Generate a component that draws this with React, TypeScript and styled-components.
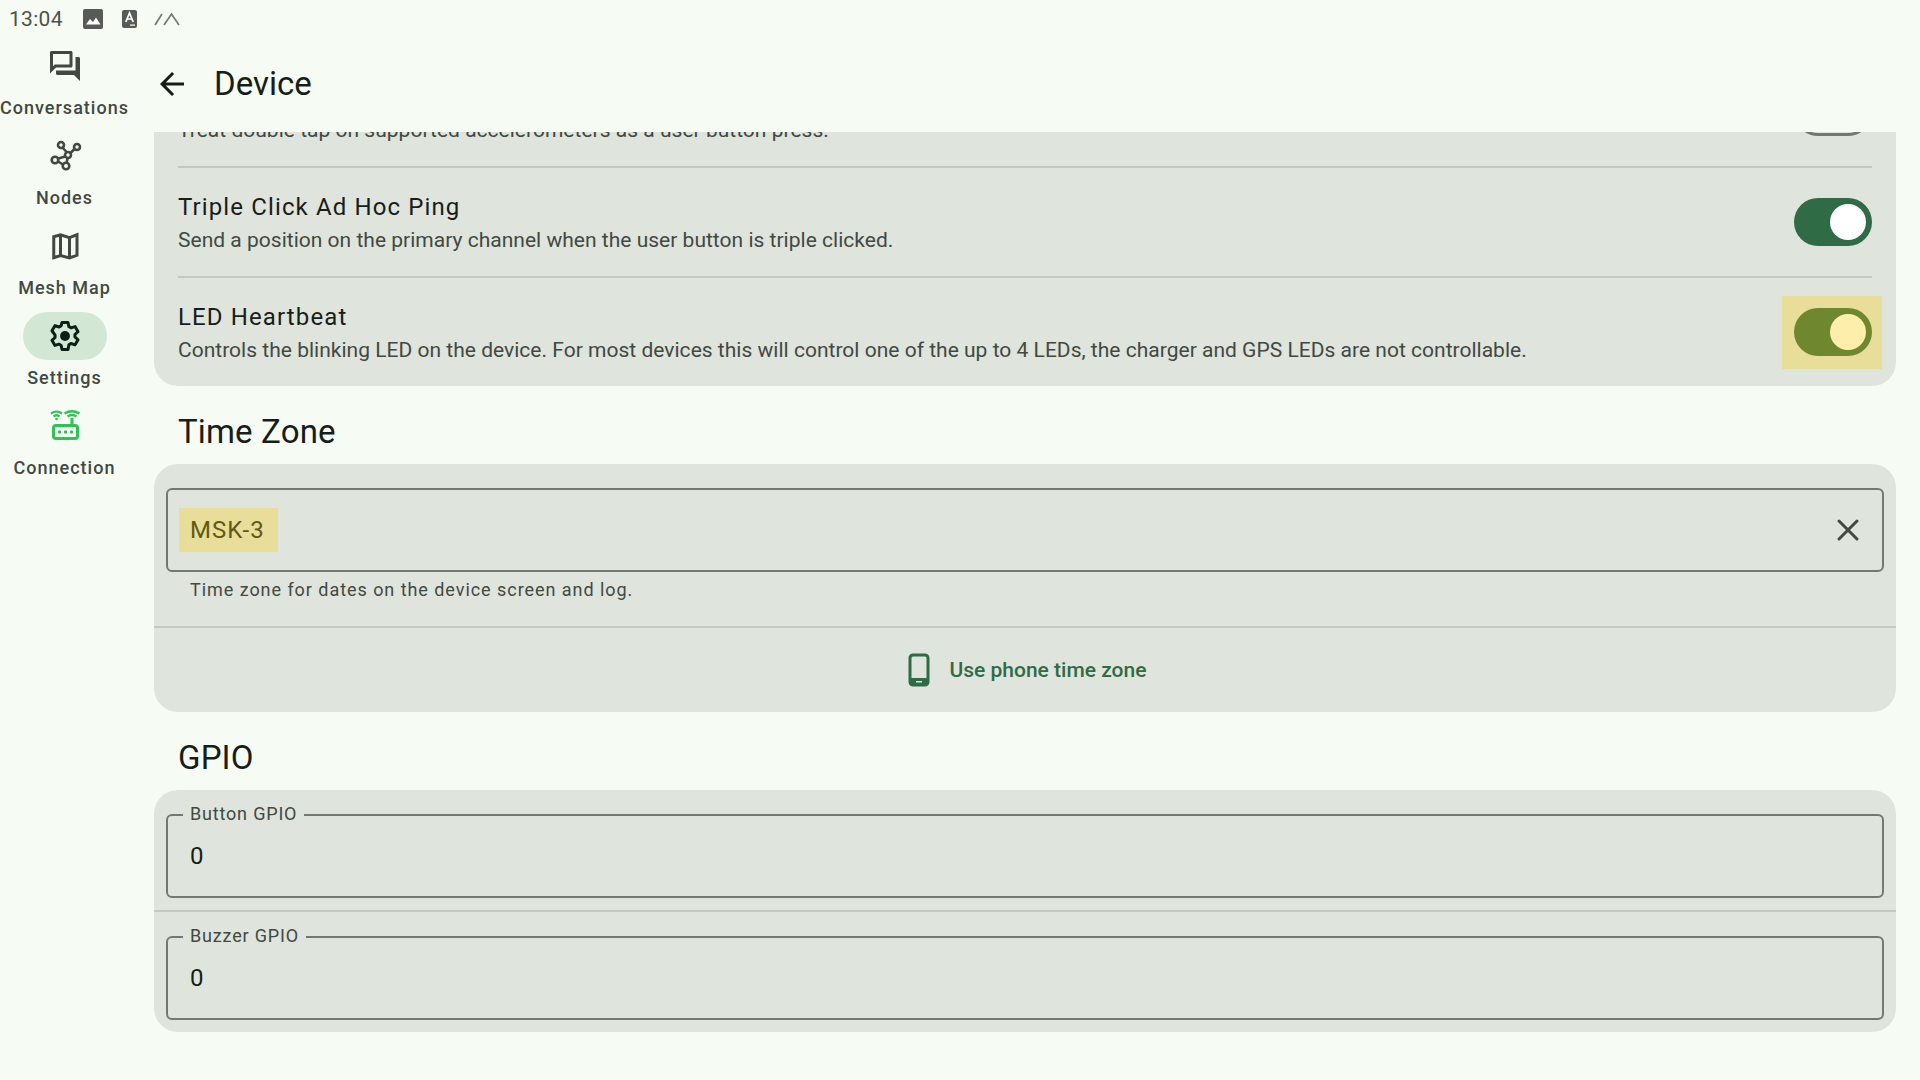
import React from "react";
import styled, { createGlobalStyle } from "styled-components";

const Global = createGlobalStyle`
  html, body { margin: 0; padding: 0; height: 100%; overflow: hidden; background: #f6fbf3; }
  body { font-family: Roboto, "Liberation Sans", sans-serif; color: #171d19; }
  * { box-sizing: border-box; }
`;

const Screen = styled.div`
  width: 1920px;
  height: 1080px;
  display: flex;
  flex-direction: column;
  background: #f6fbf3;
  overflow: hidden;
`;
const StatusBar = styled.div`
  height: 36px;
  flex: none;
  display: flex;
  align-items: center;
  padding: 2px 0 0 9px;
  color: #4c524e;
`;
const Clock = styled.span`
  font-size: 21px;
  width: 74px;
  letter-spacing: 0.3px;
`;
const StatusIcon = styled.svg<{ $gap: number }>`
  display: block;
  flex: none;
  margin-right: ${(p) => p.$gap}px;
`;
const Body = styled.div`
  flex: 1;
  display: flex;
  min-height: 0;
`;
const Rail = styled.nav`
  width: 129px;
  flex: none;
  padding-top: 6px;
  display: flex;
  flex-direction: column;
`;
const RailItem = styled.div`
  height: 90px;
  display: flex;
  flex-direction: column;
  align-items: center;
`;
const Pill = styled.div<{ $active?: boolean }>`
  width: 84px;
  height: 48px;
  border-radius: 24px;
  display: flex;
  align-items: center;
  justify-content: center;
  background: ${(p) => (p.$active ? "#d2e8d5" : "transparent")};
  color: ${(p) => (p.$active ? "#0e2016" : "#414942")};
`;
const RailLabel = styled.span`
  margin-top: 6px;
  font-size: 18px;
  line-height: 24px;
  font-weight: 500;
  letter-spacing: 1px;
  white-space: nowrap;
  color: #414942;
`;
const Main = styled.main`
  flex: 1;
  min-width: 0;
  display: flex;
  flex-direction: column;
`;
const TopBar = styled.header`
  height: 96px;
  flex: none;
  display: flex;
  align-items: center;
  padding-left: 25px;
`;
const BackIcon = styled.svg`
  width: 36px;
  height: 36px;
  flex: none;
  color: #171d19;
  margin-right: 24px;
`;
const Title = styled.h1`
  margin: 0;
  font-size: 33px;
  font-weight: 400;
  line-height: 42px;
`;
const Viewport = styled.div`
  flex: 1;
  min-height: 0;
  overflow: hidden;
  padding: 0 24px 0 25px;
`;
const ScrollContent = styled.div`
  margin-top: -74px;
`;
const Card = styled.section`
  background: #dfe4dd;
  border-radius: 24px;
`;
const SettingRow = styled.div<{ $divider?: boolean }>`
  margin: 0 24px;
  height: ${(p) => (p.$divider ? 110 : 108)}px;
  display: flex;
  align-items: center;
  justify-content: space-between;
  border-bottom: ${(p) => (p.$divider ? "2px solid #c3c9c2" : "none")};
`;
const RowText = styled.div`
  display: flex;
  flex-direction: column;
`;
const RowTitle = styled.div`
  min-height: 36px;
  font-size: 24px;
  line-height: 36px;
  letter-spacing: 1.12px;
  color: #171d19;
`;
const RowDesc = styled.div`
  font-size: 21px;
  line-height: 30px;
  letter-spacing: 0.015px;
  color: #414942;
`;
const SwitchHighlight = styled.div<{ $on?: boolean }>`
  position: relative;
  width: 78px;
  height: 48px;
  flex: none;
  &::before {
    content: "";
    display: ${(p) => (p.$on ? "block" : "none")};
    position: absolute;
    inset: -12px -10px -13px -12px;
    background: #e8de9a;
  }
`;
const Track = styled.div<{ $tone: "green" | "olive" | "off" }>`
  position: relative;
  width: 78px;
  height: 48px;
  border-radius: 24px;
  background: ${(p) => (p.$tone === "green" ? "#2f6b45" : p.$tone === "olive" ? "#6f872e" : "#dfe4dd")};
  border: ${(p) => (p.$tone === "off" ? "3px solid #717971" : "none")};
`;
const Thumb = styled.div<{ $tone: "green" | "olive" }>`
  position: absolute;
  top: 6px;
  right: 6px;
  width: 36px;
  height: 36px;
  border-radius: 50%;
  background: ${(p) => (p.$tone === "green" ? "#ffffff" : "#fdeeab")};
`;
const SectionTitle = styled.h2`
  margin: 0;
  height: 78px;
  padding: 12px 0 0 24px;
  display: flex;
  align-items: center;
  font-size: 33px;
  font-weight: 400;
  letter-spacing: 0.15px;
  color: #171d19;
`;
const FieldBlock = styled.div<{ $divider?: boolean }>`
  padding: 24px 12px 12px;
  border-bottom: ${(p) => (p.$divider ? "2px solid #c3c9c2" : "none")};
`;
const OutlinedField = styled.div`
  position: relative;
  height: 84px;
  border: 2px solid #717971;
  border-radius: 6px;
  display: flex;
  align-items: center;
  padding: 0 16px 0 22px;
  justify-content: space-between;
`;
const ValueText = styled.span`
  font-size: 24px;
  line-height: 36px;
  letter-spacing: 0.3px;
  color: #171d19;
`;
const MatchedValue = styled.span`
  margin-left: -11px;
  padding: 0 13px 0 11px;
  height: 44px;
  display: flex;
  align-items: center;
  font-size: 24px;
  letter-spacing: 1px;
  background: #e8de9a;
  color: #625a14;
`;
const FloatLabel = styled.label`
  position: absolute;
  top: -14px;
  left: 15px;
  padding: 0 7px;
  background: #dfe4dd;
  font-size: 18px;
  line-height: 24px;
  letter-spacing: 0.82px;
  color: #414942;
`;
const Support = styled.div`
  margin: 6px 0 0 24px;
  font-size: 18px;
  line-height: 24px;
  letter-spacing: 0.95px;
  color: #414942;
  padding-bottom: 12px;
`;
const ActionRow = styled.div`
  height: 84px;
  display: flex;
  align-items: center;
  justify-content: center;
  gap: 20px;
  padding-left: 4px;
  color: #2f6b45;
  font-size: 21px;
  font-weight: 500;
  letter-spacing: 0;
`;

const Forum = () => (
  <svg width="36" height="36" viewBox="0 0 24 24" fill="currentColor">
    <path d="M15 4v7H5.170L4 12.170V4h11m1-2H3c-.550 0-1 .450-1 1v14l4-4h10c.550 0 1-.450 1-1V3c0-.550-.450-1-1-1zm5 4h-2v9H6v2c0 .550.450 1 1 1h11l4 4V7c0-.550-.450-1-1-1z" />
  </svg>
);
const Nodes = () => (
  <svg width="36" height="36" viewBox="0 0 36 36" fill="none" stroke="currentColor" strokeWidth="2.600">
    <path d="M20 14.500 L15.500 9.500 M23.500 15 L27.500 11 M18.500 18.500 L11 20.500 M20.500 19.800 L19.700 25" />
    <circle cx="14" cy="7" r="3" />
    <circle cx="30" cy="9" r="3" />
    <circle cx="21" cy="17" r="3" />
    <circle cx="8" cy="22" r="3.300" />
    <circle cx="19" cy="28" r="3.300" />
    <path d="M11 23.500 L16 26.500" />
  </svg>
);
const MapIcon = () => (
  <svg width="36" height="36" viewBox="0 0 24 24" fill="none" stroke="currentColor" strokeWidth="2" strokeLinejoin="miter">
    <path d="M4.500 5.800 L9 4.600 L15 6.400 L20 4.400 V18.200 L15 20 L9 18.400 L4.500 19.800 Z" />
    <path d="M9 4.600 V18.400 M15 6.400 V20" />
  </svg>
);
const Gear = () => (
  <svg width="36" height="36" viewBox="0 0 24 24" fill="none" stroke="currentColor" strokeWidth="2" strokeLinejoin="round">
    <path d="M10 3h4l.6 2.800c.5.2 1 .5 1.400.8l2.700-.9 2 3.400-2.100 1.900a6 6 0 0 1 0 1.600l2.100 1.900-2 3.400-2.700-.9c-.4.3-.9.6-1.400.8L14 21h-4l-.6-2.800c-.5-.2-1-.5-1.400-.8l-2.700.9-2-3.400 2.100-1.900a6 6 0 0 1 0-1.600L3.300 8.500l2-3.400 2.700.9c.4-.3.9-.6 1.400-.8z" />
    <circle cx="12" cy="12" r="3.300" fill="currentColor" stroke="none" />
  </svg>
);
const Router = () => (
  <svg width="36" height="36" viewBox="0 0 36 36" fill="none" stroke="#2fc254" strokeWidth="3">
    <rect x="6.500" y="17.500" width="24" height="13" rx="2.500" />
    <path d="M25 17 V10" />
    <circle cx="12.500" cy="24" r="1.700" fill="#2fc254" stroke="none" />
    <circle cx="18.500" cy="24" r="1.700" fill="#2fc254" stroke="none" />
    <circle cx="24.500" cy="24" r="1.700" fill="#2fc254" stroke="none" />
    <path d="M4 5.500 Q9.500 1.500 15 5.500 M6.500 8.500 Q9.500 6 12.500 8.500" strokeWidth="2.200" />
    <circle cx="9.500" cy="11" r="1.300" fill="#2fc254" stroke="none" />
    <path d="M17.500 5.500 Q25 1 32.500 5.500 M20.500 8.500 Q25 5.500 29.500 8.500" strokeWidth="2.400" />
  </svg>
);
const Phone = () => (
  <svg width="22" height="34" viewBox="0 0 22 34" fill="none">
    <rect x="2" y="2" width="18" height="30" rx="3" stroke="#2f6b45" strokeWidth="3" />
    <rect x="2" y="25" width="18" height="7" fill="#2f6b45" />
    <rect x="8" y="28" width="6" height="1.500" fill="#dfe4dd" />
  </svg>
);
const Clear = () => (
  <svg width="36" height="36" viewBox="0 0 36 36" fill="none" stroke="#414942" strokeWidth="3" strokeLinecap="round">
    <path d="M9 9 L27 27 M27 9 L9 27" />
  </svg>
);

const SwitchControl = ({ tone, highlight }: { tone: "green" | "olive"; highlight?: boolean }) => (
  <SwitchHighlight $on={highlight}>
    <Track $tone={tone}>
      <Thumb $tone={tone} />
    </Track>
  </SwitchHighlight>
);

const nav = [
  { label: "Conversations", icon: <Forum /> },
  { label: "Nodes", icon: <Nodes /> },
  { label: "Mesh Map", icon: <MapIcon /> },
  { label: "Settings", icon: <Gear />, active: true },
  { label: "Connection", icon: <Router /> },
];

export default function App() {
  return (
    <Screen>
      <Global />
      <StatusBar>
        <Clock>13:04</Clock>
        <StatusIcon $gap={19} width="20" height="20" viewBox="0 0 20 20">
          <rect width="20" height="20" rx="2" fill="#565b57" />
          <path d="M3 15.500 L7 10 L10 13 L13 8.500 L17.500 15.500 Z" fill="#fff" />
        </StatusIcon>
        <StatusIcon $gap={17} width="15" height="18" viewBox="0 0 15 18">
          <rect width="15" height="18" rx="2" fill="#565b57" />
          <path d="M3.800 12 L7.500 3 L11.200 12 M5.300 9 H9.700" stroke="#fff" strokeWidth="1.700" fill="none" />
          <rect x="8" y="14.500" width="5" height="1.200" fill="#fff" />
        </StatusIcon>
        <StatusIcon $gap={0} width="26" height="14" viewBox="0 0 26 14">
          <path d="M1 13 L8 2 M10 13 L17.500 2 L25 13" stroke="#787d79" strokeWidth="1.800" fill="none" />
        </StatusIcon>
      </StatusBar>
      <Body>
        <Rail>
          {nav.map((n) => (
            <RailItem key={n.label}>
              <Pill $active={n.active}>{n.icon}</Pill>
              <RailLabel>{n.label}</RailLabel>
            </RailItem>
          ))}
        </Rail>
        <Main>
          <TopBar>
            <BackIcon viewBox="0 0 24 24" fill="currentColor">
              <path d="M20 11H7.830l5.590-5.590L12 4l-8 8 8 8 1.410-1.410L7.830 13H20v-2z" />
            </BackIcon>
            <Title>Device</Title>
          </TopBar>
          <Viewport>
            <ScrollContent>
              <Card>
                <SettingRow $divider>
                  <RowText>
                    <RowTitle />
                    <RowDesc>Treat double tap on supported accelerometers as a user button press.</RowDesc>
                  </RowText>
                  <SwitchHighlight>
                    <Track $tone="off" />
                  </SwitchHighlight>
                </SettingRow>
                <SettingRow $divider>
                  <RowText>
                    <RowTitle>Triple Click Ad Hoc Ping</RowTitle>
                    <RowDesc>Send a position on the primary channel when the user button is triple clicked.</RowDesc>
                  </RowText>
                  <SwitchControl tone="green" />
                </SettingRow>
                <SettingRow>
                  <RowText>
                    <RowTitle>LED Heartbeat</RowTitle>
                    <RowDesc>
                      Controls the blinking LED on the device. For most devices this will control one of the up to 4 LEDs, the charger and GPS LEDs are not controllable.
                    </RowDesc>
                  </RowText>
                  <SwitchControl tone="olive" highlight />
                </SettingRow>
              </Card>
              <SectionTitle>Time Zone</SectionTitle>
              <Card>
                <FieldBlock $divider>
                  <OutlinedField>
                    <MatchedValue>MSK-3</MatchedValue>
                    <Clear />
                  </OutlinedField>
                  <Support>Time zone for dates on the device screen and log.</Support>
                </FieldBlock>
                <ActionRow>
                  <Phone />
                  <span>Use phone time zone</span>
                </ActionRow>
              </Card>
              <SectionTitle>GPIO</SectionTitle>
              <Card>
                <FieldBlock $divider>
                  <OutlinedField>
                    <FloatLabel>Button GPIO</FloatLabel>
                    <ValueText>0</ValueText>
                  </OutlinedField>
                </FieldBlock>
                <FieldBlock>
                  <OutlinedField>
                    <FloatLabel>Buzzer GPIO</FloatLabel>
                    <ValueText>0</ValueText>
                  </OutlinedField>
                </FieldBlock>
              </Card>
            </ScrollContent>
          </Viewport>
        </Main>
      </Body>
    </Screen>
  );
}
